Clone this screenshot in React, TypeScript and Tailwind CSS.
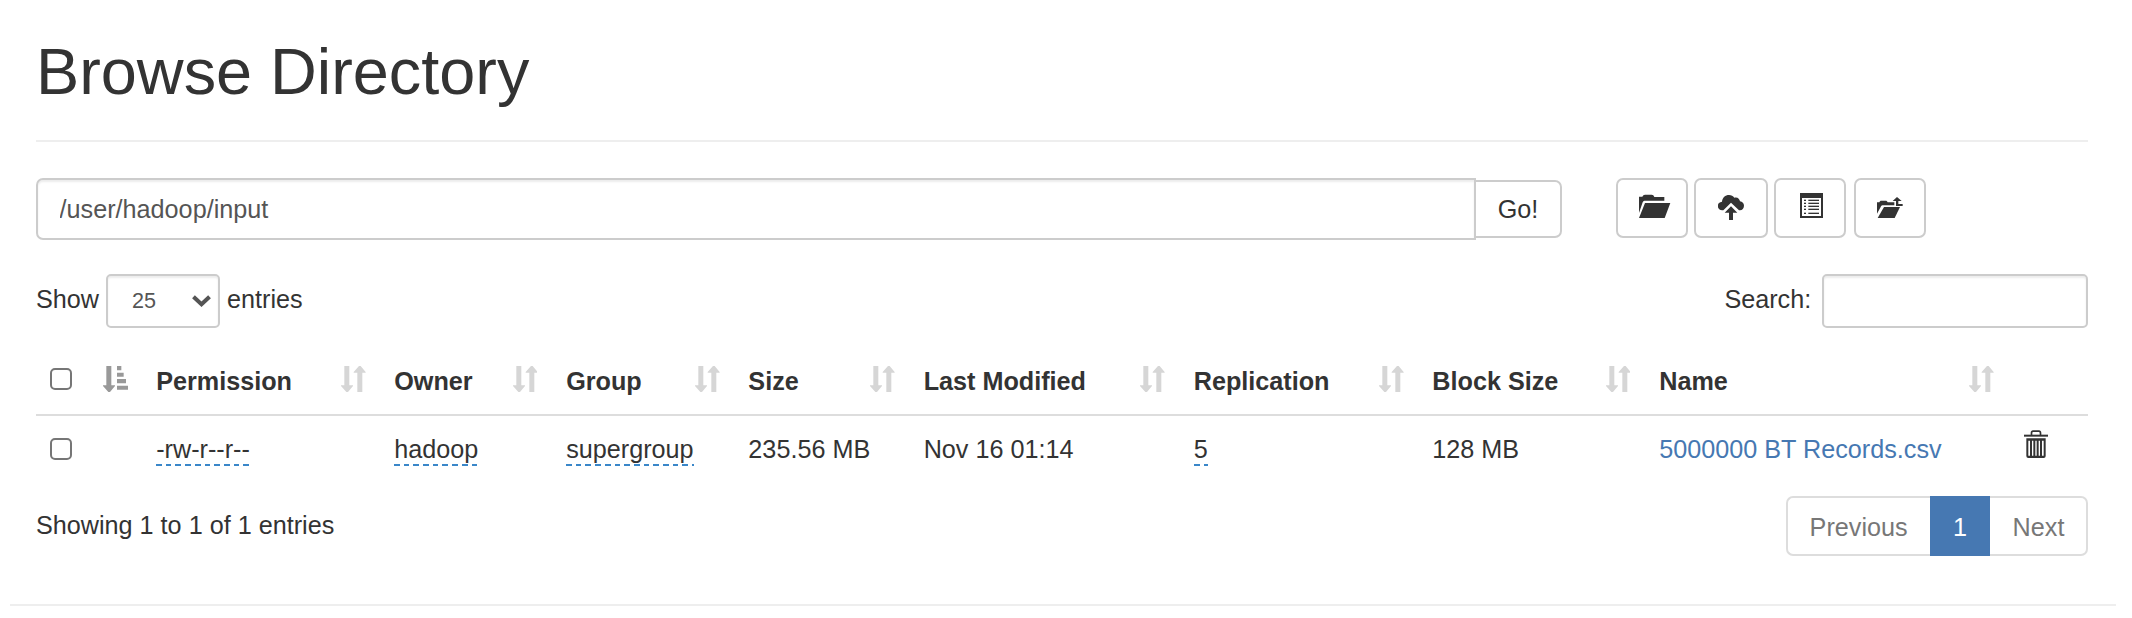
import React from "react";

const FolderOpenIcon = () => (
  <svg viewBox="27 27 96 72" className="h-[24px] w-[32px] fill-[#333]">
    <path d="M27 35h10c2-4 4-6 8-6h20c4 0 6 2 8 7h30v11H46c-4 0-6 1-8 5L27 84z" />
    <path d="M45 54h76l-17 45H27z" />
  </svg>
);

const CloudUploadIcon = () => (
  <svg viewBox="264 30 81 75" className="h-[25px] w-[27px] fill-[#333]">
    <path d="M277 76a13 13 0 0 1-1-26c1-12 10-20 21-20 7 0 12 3 16 8 9-3 16 3 17 11 7 1 12 6 12 13 0 8-5 13-12 14h-3L303 53 280 76z" />
    <path d="M303 64l19 19h-13v22h-12V83h-13z" />
  </svg>
);

const rows = [44, 53, 62, 71, 83];

const ListIcon = () => (
  <svg viewBox="30 24 69 75" className="h-[25px] w-[23px] fill-[#333]">
    <path fillRule="evenodd" d="M30 24h69v75H30zM36 39v54h57V39z" />
    {rows.map((y) => (
      <g key={y}>
        <rect x="42" y={y} width="6" height="4" />
        <rect x="55" y={y} width="32" height="4" />
      </g>
    ))}
  </svg>
);

const FolderUpIcon = () => (
  <svg viewBox="261 36 78 63" className="h-[21px] w-[26px] fill-[#333]">
    <path d="M261 52h7c1-3 3-5 6-5h13c3 0 5 2 6 5h20v9h-33c-4 0-6 1-8 5L261 86z" />
    <path d="M282 66h48l-16 33h-51z" />
    <path d="M321 36l14 12h-10v9h13v6h-20V48h-10z" />
  </svg>
);

const SortIcon = () => (
  <svg viewBox="902 319 74 78" className="h-[26px] w-[24.67px] shrink-0 fill-[#d6d6d6]">
    <path d="M912 319h15v58h11v2l-15 18h-5l-16-18v-2h10z" />
    <path d="M951 397v-58h-11v-2l16-18h5l15 18v2h-10v58z" />
  </svg>
);

const SortAscIcon = () => (
  <svg viewBox="188 319 76 78" className="h-[26px] w-[25.33px] shrink-0 fill-[#999]">
    <path d="M198 319h15v58h11v2l-15 18h-5l-16-18v-2h10z" />
    <path d="M230 319h13v13h-13zM230 339h20v12h-20zM230 358h27v13h-27zM230 378h34v12h-34z" />
  </svg>
);

const TrashIcon = () => (
  <svg viewBox="192 211 72 84" className="h-[28px] w-[24px] fill-[#333]">
    <path d="M192 225h72v6h-72z" />
    <path d="M212 226v-6c0-5 3-8 7-8h18c4 0 7 3 7 8v6h-5v-5c0-3-1-4-3-4h-16c-2 0-3 1-3 4v5z" />
    <path
      fillRule="evenodd"
      d="M199 236h58v53q0 6-6 6h-46q-6 0-6-6zM205 243v45h5v-45zM216 243v45h4v-45zM226 243v45h4v-45zM236 243v45h4v-45zM246 243v45h5v-45z"
    />
  </svg>
);

const GRID =
  "grid grid-cols-[105.8px_238.1px_171.9px_182.2px_175.3px_270.1px_238.6px_226.9px_363.1px_80px]";
const FIELD =
  "border-2 border-[#ccc] bg-white shadow-[inset_0_2px_2px_rgba(0,0,0,0.075)] outline-none";
const DASHED =
  "-mt-px h-[2px] w-full bg-[repeating-linear-gradient(90deg,#3a87c9_0_5.7px,transparent_5.7px_9.7px)]";

const columns = ["Permission", "Owner", "Group", "Size", "Last Modified", "Replication", "Block Size", "Name"];

const Checkbox = () => (
  <input
    type="checkbox"
    className="block size-[22px] appearance-none rounded-[5px] border-2 border-[#767676] bg-white"
  />
);

function Editable({ children }: { children: React.ReactNode }) {
  return (
    <div className="inline-flex flex-col">
      <span className="leading-[32px]">{children}</span>
      <span className={DASHED} />
    </div>
  );
}

function ToolButton({ className, children }: { className: string; children: React.ReactNode }) {
  return (
    <button className={`flex h-[60px] justify-start rounded-[7px] border-2 border-[#ccc] bg-white ${className}`}>
      {children}
    </button>
  );
}

export default function App() {
  return (
    <div className="h-[618px] w-[2132px] overflow-hidden bg-white font-['Liberation_Sans',Arial,sans-serif] text-[25.2px] text-[#333]">
      <main className="ml-[36px] w-[2052px]">
        <h1 className="h-[142px] border-b-2 border-[#eee] text-[64.8px] leading-[143px] font-normal">
          Browse Directory
        </h1>

        <div className="mt-[36px] flex h-[62px] items-start">
          <input
            type="text"
            defaultValue="/user/hadoop/input"
            className={`h-[62px] w-[1440px] rounded-l-[7px] pl-[21.6px] text-[#555] ${FIELD}`}
          />
          <button className="mt-[2px] h-[58px] w-[86px] rounded-r-[7px] border-2 border-l-0 border-[#ccc] bg-white leading-[54px]">
            Go!
          </button>
          <div className="ml-[54px] flex">
            <ToolButton className="w-[72px] pt-[14px] pl-[21px]">
              <FolderOpenIcon />
            </ToolButton>
            <ToolButton className="ml-[6px] w-[74px] pt-[15px] pl-[22px]">
              <CloudUploadIcon />
            </ToolButton>
            <ToolButton className="ml-[6px] w-[72px] pt-[13px] pl-[24px]">
              <ListIcon />
            </ToolButton>
            <ToolButton className="ml-[8px] w-[72px] pt-[17px] pl-[21px]">
              <FolderUpIcon />
            </ToolButton>
          </div>
        </div>

        <div className="mt-[34px] flex h-[54px] justify-between">
          <label className="flex leading-[51px]">
            <span className="w-[70px]">Show</span>
            <span
              className={`flex h-[54px] w-[114px] justify-between rounded-[5px] pr-[7px] pl-[24px] text-[21.6px] leading-[50px] text-[#555] ${FIELD}`}
            >
              25
              <svg viewBox="0 0 18 11" className="mt-[19px] h-[12px] w-[19px] fill-none stroke-[#555] stroke-[3.8]">
                <path d="M1.4 1.5 9 8.6 16.6 1.5" />
              </svg>
            </span>
            <span className="ml-[7px]">entries</span>
          </label>
          <label className="flex leading-[51px]">
            <span className="mr-[10.8px]">Search:</span>
            <input type="text" className={`h-[54px] w-[266px] rounded-[5px] ${FIELD}`} />
          </label>
        </div>

        <div className={`${GRID} mt-[18px] h-[70px] border-b-2 border-[#ddd] font-bold`}>
          <div className="flex pl-[14.4px]">
            <div className="pt-[22px]">
              <Checkbox />
            </div>
            <div className="pt-[20px] pl-[30.5px]">
              <SortAscIcon />
            </div>
          </div>
          {columns.map((name) => (
            <div key={name} className="flex justify-between px-[14.4px] pt-[20px]">
              <span className="leading-[31px] whitespace-nowrap">{name}</span>
              <SortIcon />
            </div>
          ))}
          <div />
        </div>

        <div className={`${GRID} h-[67px] *:pt-[17px] *:pl-[14.4px] *:leading-[32px] *:whitespace-nowrap`}>
          <div>
            <div className="pt-[5px]">
              <Checkbox />
            </div>
          </div>
          <div><Editable>-rw-r--r--</Editable></div>
          <div><Editable>hadoop</Editable></div>
          <div><Editable>supergroup</Editable></div>
          <div>235.56 MB</div>
          <div>Nov 16 01:14</div>
          <div><Editable>5</Editable></div>
          <div>128 MB</div>
          <div><a className="text-[#4678b2]">5000000 BT Records.csv</a></div>
          <div className="flex">
            <div className="-mt-[3px] pl-[2px]">
              <TrashIcon />
            </div>
          </div>
        </div>

        <div className="mt-[13px] flex h-[60px] justify-between">
          <div className="leading-[59px]">Showing 1 to 1 of 1 entries</div>
          <nav className="flex h-[60px] text-[#777]">
            <a className="w-[144px] rounded-l-[7px] border-2 border-r-0 border-[#ddd] pl-[21.6px] leading-[58px]">
              Previous
            </a>
            <a className="w-[60px] bg-[#4678b2] text-center leading-[62px] text-white">1</a>
            <a className="w-[98px] rounded-r-[7px] border-2 border-l-0 border-[#ddd] pl-[22.6px] leading-[58px]">
              Next
            </a>
          </nav>
        </div>
      </main>
      <hr className="mt-[48px] ml-[10px] w-[2106px] border-t-2 border-[#eee]" />
    </div>
  );
}
